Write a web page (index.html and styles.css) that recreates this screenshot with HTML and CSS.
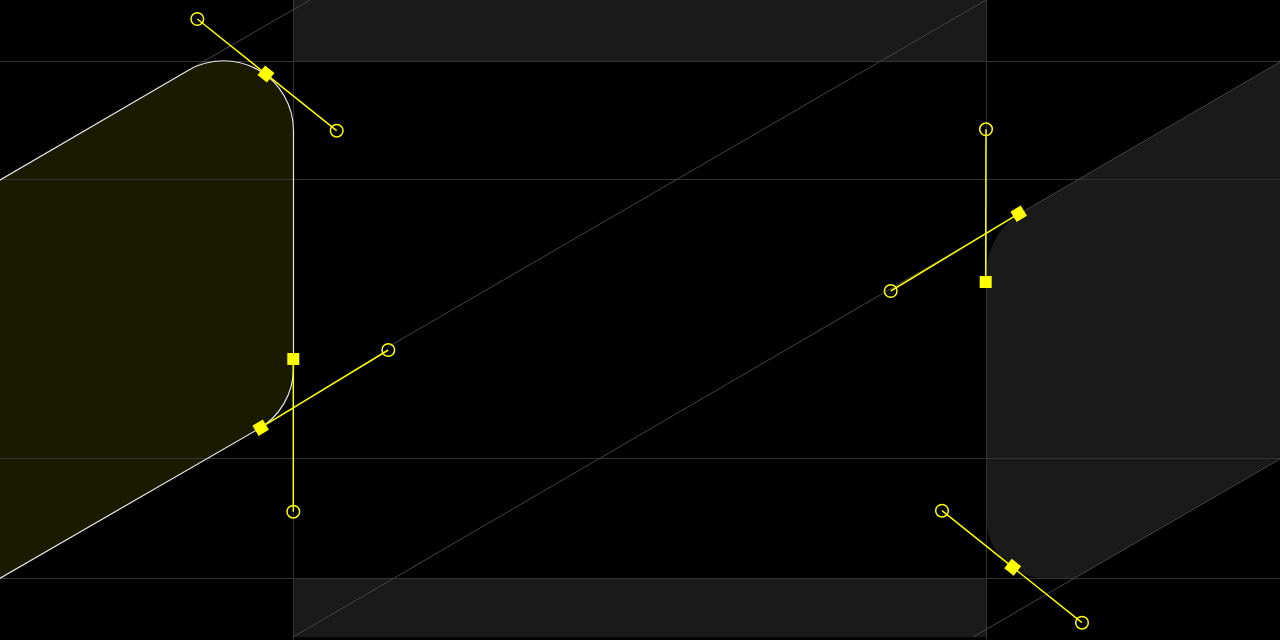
FILE: index.html
```html
<!DOCTYPE html>
<html lang="en">
<head>
<meta charset="utf-8">
<title>Path editor</title>
<link rel="stylesheet" href="styles.css">
</head>
<body>
<main class="canvas">
  <svg class="stage" width="1280" height="640" viewBox="0 0 1280 640" xmlns="http://www.w3.org/2000/svg">
    <defs>
      <clipPath id="viewport"><rect x="0" y="0" width="1280" height="637"/></clipPath>
    </defs>

    <g clip-path="url(#viewport)">
      <!-- neighbouring frames -->
      <rect class="frame" x="293" y="0" width="693" height="61.5"/>
      <rect class="frame" x="293" y="578.5" width="693" height="60"/>
      <path class="frame" d="M1290 56.1 L1020.9 213 A70 70 0 0 0 986.5 273.7 L986.5 518 A60 60 0 0 0 1046 578.5 L1075 578.5 L1290 453 Z"/>

      <!-- selected shape -->
      <path class="shape" d="M-10 185.8 L188 70.4 A70 70 0 0 1 293.5 131 L293.5 368.6 A70 70 0 0 1 258 429.2 L-10 584 Z"/>
    </g>

    <!-- guides -->
    <g class="grid">
      <line x1="0" y1="61.5" x2="1280" y2="61.5"/>
      <line x1="0" y1="179.5" x2="1280" y2="179.5"/>
      <line x1="0" y1="458.5" x2="1280" y2="458.5"/>
      <line x1="0" y1="578.5" x2="1280" y2="578.5"/>
      <line x1="293.5" y1="0" x2="293.5" y2="640"/>
      <line x1="986.5" y1="0" x2="986.5" y2="640"/>
    </g>
    <g class="rays">
      <line x1="188" y1="70.4" x2="310" y2="0"/>
      <line x1="986" y1="0" x2="388" y2="347"/>
      <line x1="293" y1="637" x2="1280" y2="62"/>
      <line x1="973" y1="637" x2="1280" y2="459"/>
      <line x1="258" y1="429.2" x2="293.5" y2="408.5"/>
    </g>

    <!-- outline of the selected shape -->
    <path class="outline" d="M-10 185.8 L188 70.4 A70 70 0 0 1 293.5 131 L293.5 368.6 A70 70 0 0 1 258 429.2 L-10 584"/>

    <!-- bezier handles -->
    <g class="handles">
      <line x1="197.3" y1="19" x2="336.7" y2="130.7"/>
      <line x1="293.3" y1="359" x2="293.3" y2="511.7"/>
      <line x1="260.7" y1="427.7" x2="388.3" y2="350"/>
      <line x1="1018.7" y1="213.7" x2="890.7" y2="291"/>
      <line x1="985.7" y1="282" x2="986" y2="129.3"/>
      <line x1="942" y1="510.7" x2="1082" y2="622.7"/>
    </g>
    <g class="knobs">
      <circle cx="197.3" cy="19" r="6.3"/>
      <circle cx="336.7" cy="130.7" r="6.3"/>
      <circle cx="293.3" cy="511.7" r="6.3"/>
      <circle cx="388.3" cy="350" r="6.3"/>
      <circle cx="890.7" cy="291" r="6.3"/>
      <circle cx="986" cy="129.3" r="6.3"/>
      <circle cx="942" cy="510.7" r="6.3"/>
      <circle cx="1082" cy="622.7" r="6.3"/>
    </g>
    <g class="anchors">
      <rect x="-6" y="-6" width="12" height="12" transform="translate(266 74) rotate(38.7)"/>
      <rect x="-6" y="-6" width="12" height="12" transform="translate(293.3 359)"/>
      <rect x="-6" y="-6" width="12" height="12" transform="translate(260.7 427.7) rotate(-31)"/>
      <rect x="-6" y="-6" width="12" height="12" transform="translate(1018.7 213.7) rotate(-31)"/>
      <rect x="-6" y="-6" width="12" height="12" transform="translate(985.7 282)"/>
      <rect x="-6" y="-6" width="12" height="12" transform="translate(1012.7 567.3) rotate(38.7)"/>
    </g>
  </svg>
</main>
</body>
</html>
```

FILE: styles.css
```css
html,
body {
  margin: 0;
  padding: 0;
  background: #000;
  overflow: hidden;
}

.canvas {
  width: 1280px;
  height: 640px;
  background: #000;
}

.stage {
  display: block;
}

.frame {
  fill: #1a1a1a;
}

.shape {
  fill: rgba(255, 255, 0, 0.1);
}

.grid line {
  stroke: #333;
  stroke-width: 1;
}

.rays line {
  stroke: #444;
  stroke-width: 1;
}

.outline {
  fill: none;
  stroke: #e6e6e6;
  stroke-width: 1.2;
}

.handles line {
  stroke: #ffff00;
  stroke-width: 1.5;
}

.knobs circle {
  fill: none;
  stroke: #ffff00;
  stroke-width: 1.5;
}

.anchors rect {
  fill: #ffff00;
}
```
